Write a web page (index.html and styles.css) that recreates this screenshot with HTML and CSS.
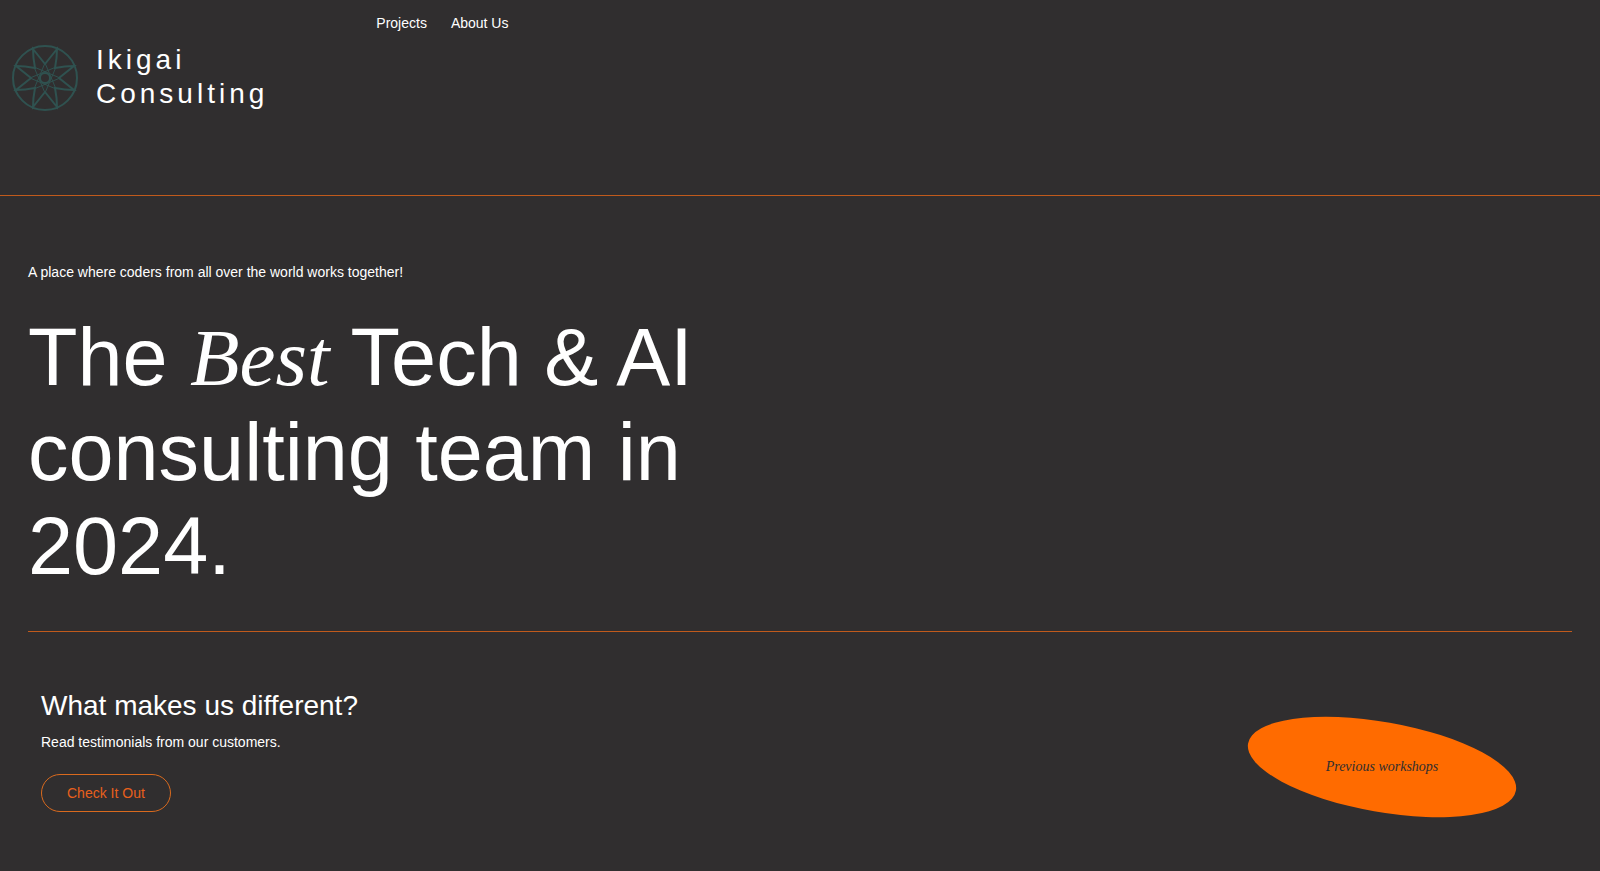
FILE: index.html
```html
<!DOCTYPE html>
<html lang="en">
<head>
    <meta charset="UTF-8">
    <meta name="viewport" content="width=device-width, initial-scale=1.0">
    <title>Ikigai Consulting</title>
    <link rel="stylesheet" href="styles.css">
</head>
<body>
    <header class="header">
        <a class="logo" href="#">
            <svg class="logo-icon" viewBox="-34 -35 68 70" aria-hidden="true">
                <circle r="32"/>
                <circle r="5"/>
                <!-- inner star -->
                <path class="star" d="M0 -15 L11 11 L-15 0 L11 -11 L0 15 L-11 -11 L15 0 L-11 11 Z"/>
                <!-- outer petals -->
                <path d="M-12 -29 L0 -14 L12 -29 Q12 -20 10 -10 Q20 -12 29 -12 L14 0 L29 12 Q20 12 10 10 Q12 20 12 29 L0 14 L-12 29 Q-12 20 -10 10 Q-20 12 -29 12 L-14 0 L-29 -12 Q-20 -12 -10 -10 Q-12 -20 -12 -29 Z"/>
            </svg>
            <span class="logo-text">Ikigai<br>Consulting</span>
        </a>
        <nav class="nav">
            <a href="#">Projects</a>
            <a href="#">About Us</a>
        </nav>
    </header>

    <main class="main">
        <section class="hero">
            <p class="tagline">A place where coders from all over the world works together!</p>
            <h1>The <em>Best</em> Tech &amp; AI consulting team in 2024.</h1>
        </section>

        <section class="different">
            <div class="testimonials">
                <h2>What makes us different?</h2>
                <p>Read testimonials from our customers.</p>
                <button class="btn" type="button">Check It Out</button>
            </div>
            <a class="workshops" href="#">Previous workshops</a>
        </section>
    </main>
</body>
</html>
```
FILE: styles.css
```css
* {
    box-sizing: border-box;
    margin: 0;
    padding: 0;
}
body {
    background-color: #302e2f;
    color: #fff;
    font-family: "Liberation Sans", Arial, sans-serif;
    font-size: 14px;
    line-height: 20px;
}
a {
    color: inherit;
    text-decoration: none;
}

/* Header */
.header {
    display: flex;
    align-items: flex-start;
    gap: 108px;
    min-height: 196px;
    padding: 13px 11px;
    border-bottom: 1px solid #c05a1c;
}
.logo {
    display: flex;
    align-items: flex-start;
    gap: 17px;
    padding-top: 30px;
}
.logo-icon {
    width: 68px;
    height: 70px;
    fill: none;
    stroke: #2f5250;
    stroke-width: 2;
}
.logo-icon .star {
    stroke-width: 1;
}
.logo-text {
    font-size: 28px;
    line-height: 34px;
    letter-spacing: 4px;
}
.nav {
    display: flex;
    gap: 24px;
}

/* Hero */
.main {
    padding: 66px 28px 0;
}
.hero {
    padding-bottom: 38px;
    border-bottom: 1px solid #c05a1c;
}
.hero h1 {
    max-width: 720px;
    margin-top: 28px;
    font-size: 81px;
    font-weight: 400;
    line-height: 94px;
}
.hero em {
    font-family: "Liberation Serif", "Times New Roman", serif;
}

/* Testimonials and workshops */
.different {
    display: flex;
    justify-content: space-between;
    align-items: flex-start;
    padding: 56px 54px 56px 13px;
}
.different h2 {
    margin-bottom: 8px;
    font-size: 28px;
    font-weight: 400;
    line-height: 36px;
}
.btn {
    margin-top: 22px;
    padding: 8px 25px;
    border: 1px solid #d96a1e;
    border-radius: 20px;
    background: none;
    color: #e8601c;
    font: inherit;
    line-height: 20px;
    cursor: pointer;
}
.workshops {
    display: flex;
    justify-content: center;
    align-items: center;
    position: relative;
    z-index: 0;
    width: 272px;
    height: 90px;
    margin-top: 34px;
    color: #302e2f;
    font-family: "Liberation Serif", "Times New Roman", serif;
    font-size: 14px;
    font-style: italic;
}
.workshops::before {
    content: "";
    position: absolute;
    inset: 0;
    z-index: -1;
    border-radius: 50%;
    background-color: #ff6b00;
    transform: rotate(10deg);
}
```
